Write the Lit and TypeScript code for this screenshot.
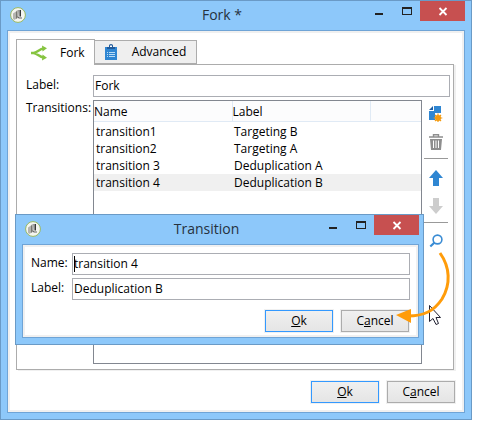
import { LitElement, html, css, svg } from "lit";
import { customElement, property } from "lit/decorators.js";

const appIcon = html`<svg class="logo" viewBox="0 0 16 16" width="16" height="16" aria-hidden="true">
  <circle cx="8" cy="8" r="7.4" fill="#f4f5f0" stroke="#98b860" stroke-width="1" />
  <path d="M3 6.5L6 4.5V12L4 13L3 11.5Z" fill="#b4b4b0" />
  <path d="M6 4.5L7.5 3V11L6 12Z" fill="#77776f" />
  <path d="M10.2 3V9.5" stroke="#222" stroke-width="1.4" fill="none" />
  <path d="M7.5 9.5L9 11H12" stroke="#666" stroke-width="1.1" fill="none" />
  <path d="M8.5 3L8 9" stroke="#999" fill="none" />
</svg>`;

const forkIcon = html`<svg viewBox="0 0 18 16" width="18" height="16" aria-hidden="true">
  <path d="M1 8H3.5C7.5 7.5 9 3.8 14 3.4M3.5 8C7.5 8.5 9 12.2 14 12.6" fill="none" stroke="#86c440" stroke-width="2.4" />
  <path d="M12 0.5L17 3.2L12.5 6.5Z M12.5 9.5L17 12.8L12 15.5Z" fill="#86c440" />
</svg>`;

const clipIcon = html`<svg viewBox="0 0 12 16" width="12" height="16" aria-hidden="true">
  <rect x="0" y="3" width="12" height="13" fill="#2f86d2" />
  <path d="M2 5V3H4V1.5Q4 0 6 0T8 1.5V3H10V5Z" fill="#205a9a" />
  <rect x="5" y="1.5" width="2" height="1.5" fill="#fff" />
  <path d="M2 8.5H3M4 8.5H10M2 10.5H3M4 10.5H10M2 12.5H3M4 12.5H10" stroke="#b9dcf6" />
</svg>`;

const newIcon = html`<svg viewBox="0 0 14 16" width="14" height="16" aria-hidden="true">
  <path d="M4 0V4H0Z" fill="#1f5fa4" />
  <path d="M5 0H12V7H6V14H0V5H5Z" fill="#2f86d2" />
  <circle cx="9" cy="12" r="3" fill="#f39a10" />
  <path d="M9 7.5V16M4.7 12H13.3M6 9L12 15M12 9L6 15" stroke="#f39a10" stroke-width="1.2" />
</svg>`;

const trashIcon = html`<svg viewBox="0 0 14 16" width="14" height="16" aria-hidden="true">
  <path d="M0 3H14M4.5 2.5V0.7H9.5V2.5" fill="none" stroke="#8e8e8e" stroke-width="1.4" />
  <path d="M1 5H13L12 16H2Z" fill="#8e8e8e" />
  <path d="M4.5 6.5V14M7 6.5V14M9.5 6.5V14" stroke="#fff" />
</svg>`;

const arrowIcon = (down: boolean) => html`<svg viewBox="0 0 14 16" width="14" height="16" aria-hidden="true">
  ${down
    ? svg`<path d="M4 0H10V8H14L7 16L0 8H4Z" fill="#cdcdcd" />`
    : svg`<path d="M4 16H10V8H14L7 0L0 8H4Z" fill="#2f86d2" />`}
</svg>`;

const zoomIcon = html`<svg viewBox="0 0 14 14" width="14" height="14" aria-hidden="true">
  <circle cx="8.5" cy="5.5" r="4.4" fill="none" stroke="#3a8cd4" stroke-width="1.6" />
  <path d="M5.5 8.5L1.3 12.5" stroke="#3a8cd4" stroke-width="2.2" />
</svg>`;

@customElement("app-window")
class AppWindow extends LitElement {
  @property() heading = "";

  static styles = css`
    :host {
      display: flex;
      flex-direction: column;
      box-sizing: border-box;
      background: #8dc8fa;
      border: 1px solid #6a9ac6;
      padding: 0 6px 6px;
    }
    .bar {
      display: flex;
      align-items: flex-start;
      height: 29px;
    }
    .logo {
      margin: 6px 0 0 3px;
      flex: none;
    }
    h1 {
      flex: 1;
      margin: 0;
      padding-left: 50px;
      font: 14px/28px "Open Sans", "Noto Sans", sans-serif;
      text-align: center;
      color: #26323e;
    }
    .controls {
      display: flex;
    }
    button {
      border: 0;
      padding: 0;
      background: none;
      width: 26px;
      height: 20px;
      display: block;
    }
    button.close {
      width: 45px;
      background: #c75050;
    }
    svg {
      display: block;
    }
    .client {
      flex: 1;
      display: flex;
      flex-direction: column;
      background: #fff;
      border: 1px solid #6fa4d6;
      box-shadow: inset 0 0 0 2px #f0f0f0;
      padding: 2px;
    }
  `;

  render() {
    return html`
      <div class="bar">
        ${appIcon}
        <h1>${this.heading}</h1>
        <div class="controls">
          <button aria-label="Minimize">
            <svg width="26" height="20"><path d="M7 13H15" stroke="#222" stroke-width="2" /></svg>
          </button>
          <button aria-label="Maximize">
            <svg width="26" height="20"><path d="M8 6H18V14H8Z M9 8V13H17V8Z" fill="#222" fill-rule="evenodd" /></svg>
          </button>
          <button class="close" aria-label="Close">
            <svg width="45" height="20"><path d="M19.5 7L26.5 14M26.5 7L19.5 14" stroke="#fff" stroke-width="1.8" /></svg>
          </button>
        </div>
      </div>
      <div class="client"><slot></slot></div>
    `;
  }
}

const rows = [
  ["transition1", "Targeting B"],
  ["transition2", "Targeting A"],
  ["transition 3", "Deduplication A"],
  ["transition 4", "Deduplication B"],
];

@customElement("app-root")
class AppRoot extends LitElement {
  static styles = css`
    :host {
      display: block;
      position: relative;
      box-sizing: border-box;
      padding: 0 8px 9px 0;
      min-height: 100vh;
      background: #fff;
      font: 12px/16px "Open Sans", "Noto Sans", sans-serif;
      color: #000;
    }
    * {
      box-sizing: border-box;
    }
    svg {
      display: block;
    }
    .main {
      min-height: calc(100vh - 9px);
    }
    .tabs {
      display: flex;
      align-items: flex-end;
      margin: 6px 8px 0 6px;
      position: relative;
      z-index: 1;
    }
    .tab {
      font: inherit;
      color: inherit;
      display: flex;
      align-items: center;
      border: 1px solid #acacac;
      background: #efefef;
      height: 24px;
      padding: 0 10px;
      gap: 15px;
      margin: 0 0 0 -1px;
    }
    .tab.active {
      background: #fff;
      border-bottom: 0;
      height: 26px;
      padding: 0 9px 0 13px;
      gap: 12px;
      margin: 0 0 -1px;
    }
    .panel {
      flex: 1;
      display: flex;
      flex-direction: column;
      gap: 3px;
      margin: 0 8px 0 6px;
      border: 1px solid #acacac;
      box-shadow: 2px 1px 0 #f0f0f0;
      padding: 10px 3px 5px 9px;
    }
    .row {
      display: flex;
    }
    .row > label,
    .row > .caption {
      width: 67px;
      flex: none;
      line-height: 20px;
    }
    .caption {
      margin-top: -2px;
    }
    input {
      flex: 1;
      min-width: 0;
      height: 22px;
      border: 1px solid #abadb3;
      padding: 0 1px 2px;
      font: inherit;
      color: #000;
      background: #fff;
      outline: 0;
    }
    .grow {
      flex: 1;
    }
    .list {
      flex: 1;
      border: 1px solid #828790;
    }
    table {
      width: 100%;
      border-collapse: collapse;
      table-layout: fixed;
    }
    th {
      font-weight: 400;
      text-align: left;
      height: 20px;
      padding: 2px 0 0;
      background: #fcfcfd;
      border-right: 1px solid #e0eaf5;
      border-bottom: 1px solid #e0eaf5;
    }
    th:last-child {
      border-right: 0;
    }
    .c1,
    .c2 {
      width: 138px;
    }
    td {
      height: 17px;
      padding: 0 0 0 2px;
      line-height: 17px;
    }
    tr.selected td {
      background: #f0f0f0;
    }
    tbody::before {
      content: "";
      display: block;
      height: 1px;
    }
    .tools {
      width: 26px;
      margin-left: 2px;
      display: flex;
      flex-direction: column;
      align-items: flex-start;
      padding-top: 6px;
      gap: 12px;
    }
    .tools button {
      border: 0;
      padding: 0;
      margin-left: 5px;
      background: none;
    }
    .tools hr {
      width: 24px;
      height: 1px;
      margin: -4px 0 -1px;
      border: 0;
      background: #999;
    }
    .buttons {
      display: flex;
      justify-content: flex-end;
      gap: 8px;
    }
    .main > .buttons {
      padding: 11px 7px 7px;
    }
    .push {
      width: 68px;
      height: 22px;
      border: 1px solid #acacac;
      box-shadow: 0 0 0 1px #f0f0f0;
      background: linear-gradient(#f0f0f0, #e5e5e5);
      font: inherit;
      color: #000;
      padding: 0 0 1px;
    }
    .push.default {
      border-color: #3399ff;
    }
    .dialog {
      position: absolute;
      left: 15px;
      right: 56px;
      top: 214px;
      height: 131px;
      padding-right: 4px;
    }
    .form {
      display: flex;
      flex-direction: column;
      gap: 3px;
      padding: 6px 6px 10px;
    }
    .form label {
      width: 41px;
    }
    .field {
      flex: 1;
      display: flex;
      position: relative;
    }
    .caret {
      position: absolute;
      left: 2px;
      top: 3px;
      width: 1px;
      height: 16px;
      background: #000;
    }
    .dialog > .buttons {
      padding: 0 7px;
    }
    .callout {
      position: absolute;
      right: 20px;
      top: 245px;
      pointer-events: none;
    }
  `;

  render() {
    return html`
      <app-window class="main" heading="Fork *">
        <div class="tabs" role="tablist">
          <button class="tab active" role="tab" aria-selected="true">${forkIcon}Fork</button>
          <button class="tab" role="tab" aria-selected="false">${clipIcon}Advanced</button>
        </div>
        <div class="panel">
          <div class="row">
            <label for="label">Label:</label>
            <input id="label" .value=${"Fork"} />
          </div>
          <div class="row grow">
            <span class="caption" id="cap">Transitions:</span>
            <div class="list">
              <table aria-labelledby="cap">
                <colgroup><col class="c1" /><col class="c2" /><col /></colgroup>
                <thead><tr><th>Name</th><th>Label</th><th></th></tr></thead>
                <tbody>
                  ${rows.map(
                    ([name, label], i) => html`<tr class=${i === 3 ? "selected" : ""}>
                      <td>${name}</td><td>${label}</td><td></td>
                    </tr>`
                  )}
                </tbody>
              </table>
            </div>
            <div class="tools">
              <button aria-label="Add">${newIcon}</button>
              <button aria-label="Delete">${trashIcon}</button>
              <hr />
              <button aria-label="Move up">${arrowIcon(false)}</button>
              <button aria-label="Move down">${arrowIcon(true)}</button>
              <hr />
              <button aria-label="Detail">${zoomIcon}</button>
            </div>
          </div>
        </div>
        <div class="buttons">
          <button class="push default"><u>O</u>k</button>
          <button class="push">C<u>a</u>ncel</button>
        </div>
      </app-window>

      <app-window class="dialog" heading="Transition">
        <div class="form">
          <div class="row">
            <label for="t-name">Name:</label>
            <div class="field"><input id="t-name" .value=${"transition 4"} /><span class="caret"></span></div>
          </div>
          <div class="row">
            <label for="t-label">Label:</label>
            <div class="field"><input id="t-label" .value=${"Deduplication B"} /></div>
          </div>
        </div>
        <div class="buttons">
          <button class="push default"><u>O</u>k</button>
          <button class="push">C<u>a</u>ncel</button>
        </div>
      </app-window>

      <svg class="callout" width="64" height="84" viewBox="396 245 64 84" aria-hidden="true">
        <path d="M429.5 305.5V321.5L433 318.5L436 324.5L438.5 323.5L436 317.5H440.5Z" fill="#fff" stroke="#223" />
        <path d="M440 253C450 267 451 284 442 299C434 311 424 316 408 316" fill="none" stroke="#ff9c0a" stroke-width="3" />
        <path d="M396 315L411 309V323Z" fill="#ff9c0a" />
      </svg>
    `;
  }
}
